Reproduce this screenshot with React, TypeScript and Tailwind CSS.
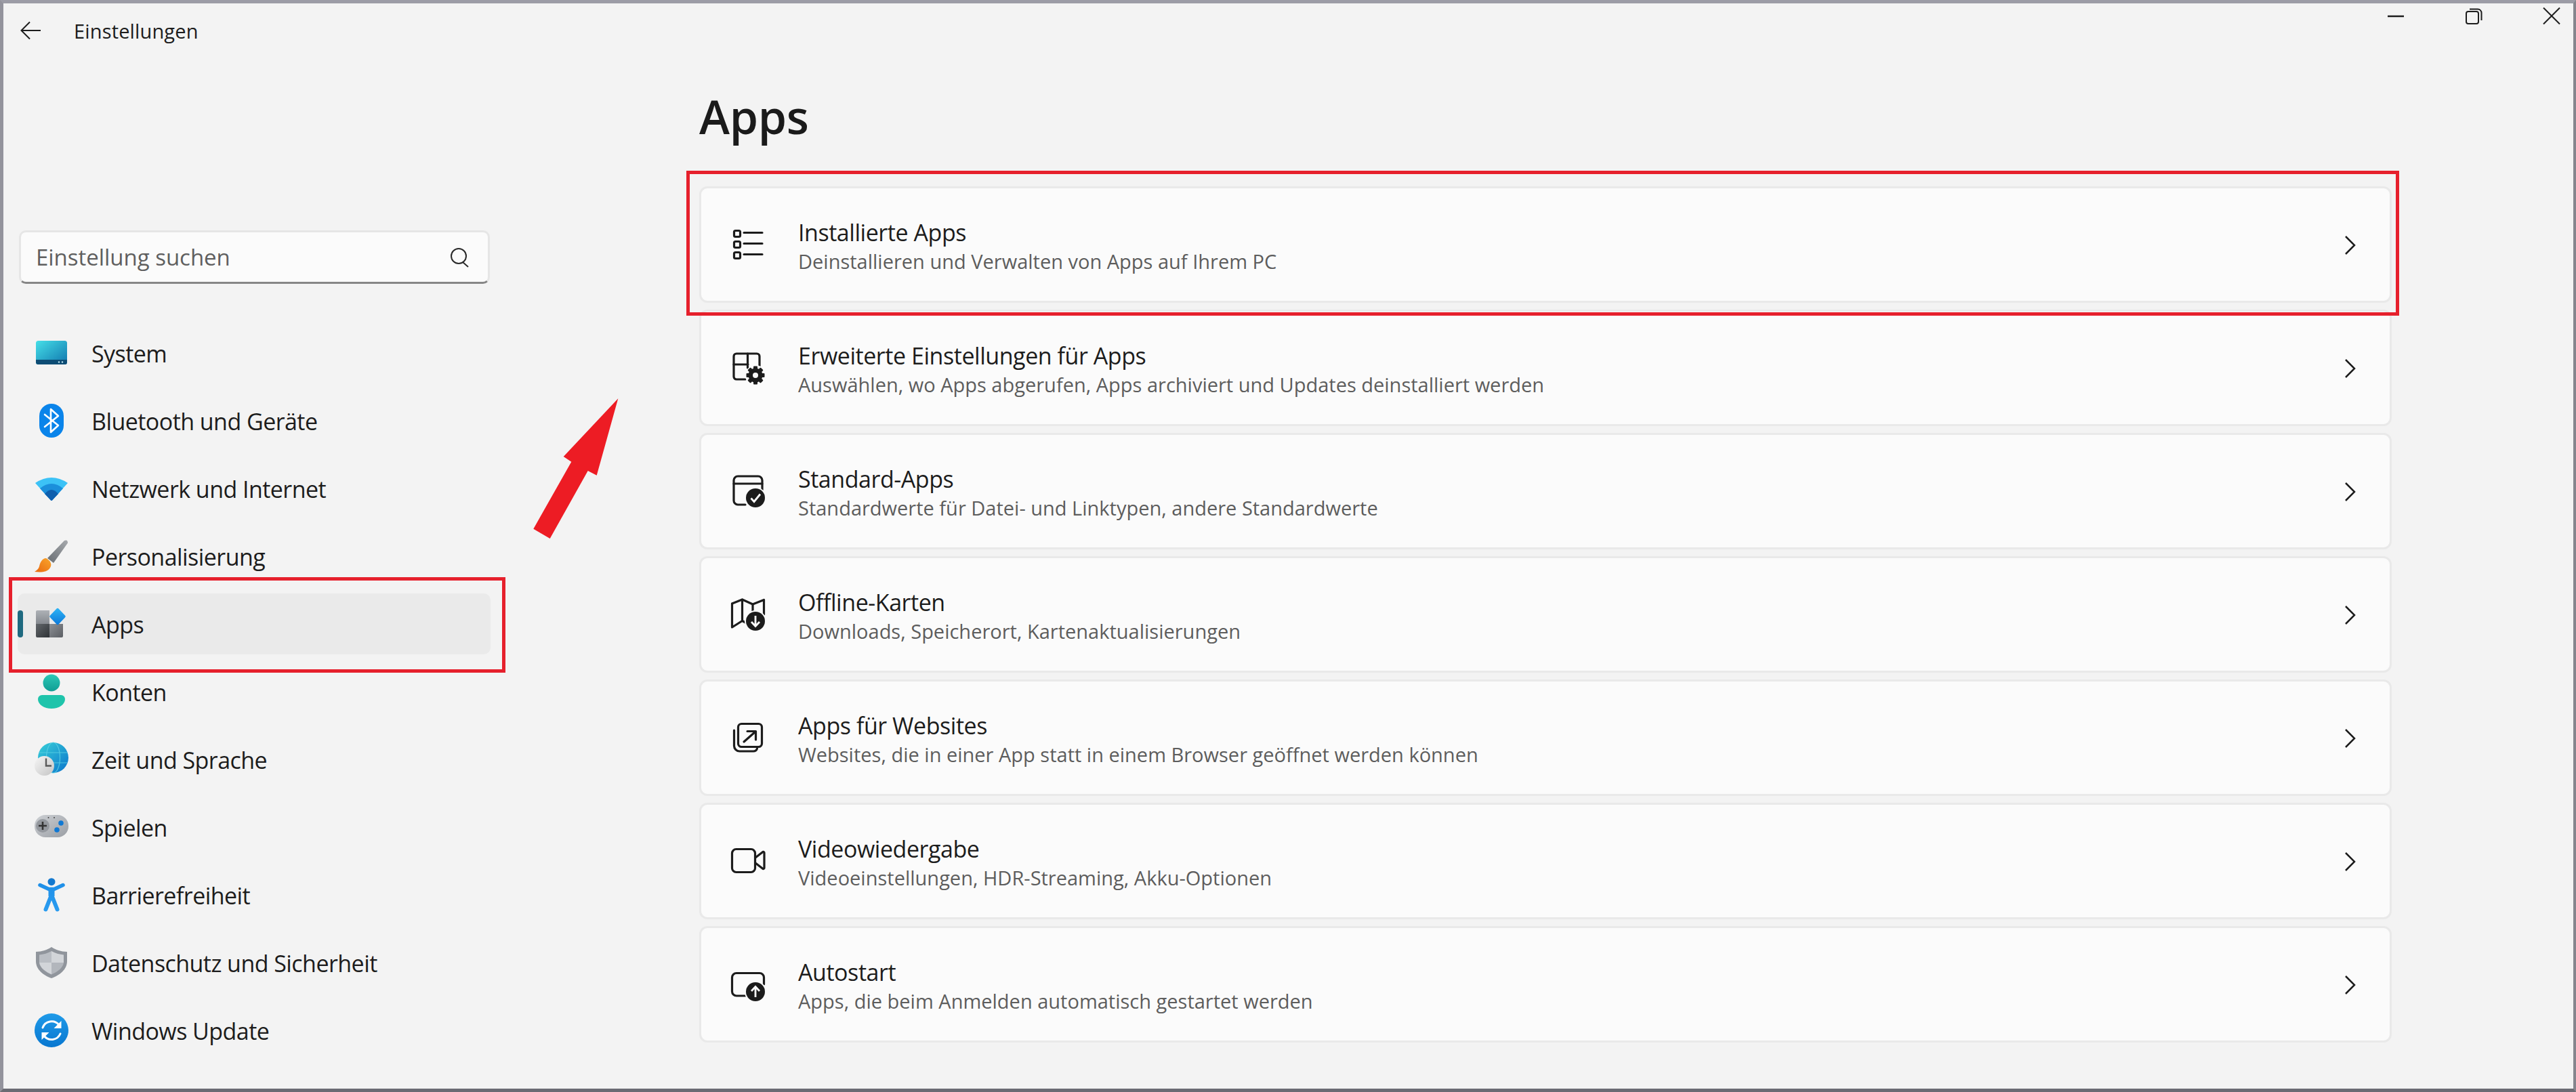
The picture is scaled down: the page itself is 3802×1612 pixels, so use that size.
import React from "react";

const INK = "#1c1c1c";

function IconSystem() {
  return (
    <svg viewBox="0 0 60 60" className="h-[60px] w-[60px]">
      <defs>
        <linearGradient id="sysA" x1="0" y1="0" x2="1" y2="1">
          <stop offset="0" stopColor="#45dfe8" />
          <stop offset="1" stopColor="#0f75ad" />
        </linearGradient>
      </defs>
      <rect x="7" y="12" width="46" height="35" rx="3.5" fill="url(#sysA)" />
      <path d="M7 40h46v3.5a3.5 3.5 0 0 1-3.5 3.5h-39A3.5 3.5 0 0 1 7 43.5z" fill="#0d4c74" />
      <circle cx="41" cy="43.5" r="1.2" fill="#bfe6f2" />
      <circle cx="46" cy="43.5" r="1.2" fill="#bfe6f2" />
    </svg>
  );
}

function IconBluetooth() {
  return (
    <svg viewBox="0 0 60 60" className="h-[60px] w-[60px]">
      <rect x="12" y="5" width="36" height="50" rx="18" fill="#0a84ea" />
      <path d="M20 21 40 37 29 47V13L40 23 20 39" fill="none" stroke="#fff" strokeWidth="2.6" strokeLinejoin="round" strokeLinecap="round" />
    </svg>
  );
}

function IconWifi() {
  return (
    <svg viewBox="0 0 60 60" className="h-[60px] w-[60px]">
      <path d="M6 22Q30 6 54 22L31 47.5a1.4 1.4 0 0 1-2 0z" fill="#3cc2f6" />
      <path d="M13 30Q30 16 47 30L31 47.5a1.4 1.4 0 0 1-2 0z" fill="#1b8fdb" />
      <path d="M20 38Q30 26 40 38L31 47.5a1.4 1.4 0 0 1-2 0z" fill="#0f5fae" />
    </svg>
  );
}

function IconBrush() {
  return (
    <svg viewBox="0 0 60 60" className="h-[60px] w-[60px]">
      <defs>
        <linearGradient id="brA" x1="1" y1="0" x2="0" y2="1">
          <stop offset="0" stopColor="#a6a9ad" />
          <stop offset="1" stopColor="#686d72" />
        </linearGradient>
        <linearGradient id="brB" x1="1" y1="0" x2="0" y2="1">
          <stop offset="0" stopColor="#f9a62c" />
          <stop offset="1" stopColor="#e8680f" />
        </linearGradient>
      </defs>
      <path d="M49 7Q54 5 54 10.500L33 40 24 33z" fill="url(#brA)" />
      <path d="M22 33C16 33 13 40 12 45 11 49 8 51 5 53 14 54 24 54 28 47 31 42 29 37 22 33z" fill="url(#brB)" />
    </svg>
  );
}

function IconApps() {
  return (
    <svg viewBox="0 0 60 60" className="h-[60px] w-[60px]">
      <defs>
        <linearGradient id="apA" x1="0" y1="0" x2="0" y2="1">
          <stop offset="0" stopColor="#adb1b6" />
          <stop offset="1" stopColor="#85898f" />
        </linearGradient>
        <linearGradient id="apB" x1="0" y1="0" x2="1" y2="1">
          <stop offset="0" stopColor="#62666a" />
          <stop offset="1" stopColor="#2f3337" />
        </linearGradient>
        <linearGradient id="apC" x1="0" y1="0" x2="1" y2="1">
          <stop offset="0" stopColor="#8d9095" />
          <stop offset="1" stopColor="#5b5e63" />
        </linearGradient>
        <linearGradient id="apD" x1="0" y1="0" x2="0" y2="1">
          <stop offset="0" stopColor="#2cb4f6" />
          <stop offset="1" stopColor="#0d78d8" />
        </linearGradient>
      </defs>
      <path d="M9 10h18v20H7V12a2 2 0 0 1 2-2z" fill="url(#apA)" />
      <path d="M7 30h20v20H9a2 2 0 0 1-2-2z" fill="url(#apB)" />
      <path d="M27 30h20v18a2 2 0 0 1-2 2H27z" fill="url(#apC)" />
      <path d="M37.500 7.500a2 2 0 0 1 3 0l9.500 10a2 2 0 0 1 0 3l-9.500 10a2 2 0 0 1-3 0l-9.500-10a2 2 0 0 1 0-3z" fill="url(#apD)" />
    </svg>
  );
}

function IconAccount() {
  return (
    <svg viewBox="0 0 60 60" className="h-[60px] w-[60px]">
      <defs>
        <linearGradient id="acA" x1="0" y1="0" x2="0" y2="1">
          <stop offset="0" stopColor="#2cc7b6" />
          <stop offset="1" stopColor="#109e94" />
        </linearGradient>
      </defs>
      <circle cx="30" cy="17" r="12.500" fill="url(#acA)" />
      <path d="M10 41a6 6 0 0 1 6-6h28a6 6 0 0 1 6 6c0 8-9 14-20 14s-20-6-20-14z" fill="#1fc4ab" />
    </svg>
  );
}

function IconTime() {
  return (
    <svg viewBox="0 0 60 60" className="h-[60px] w-[60px]">
      <defs>
        <linearGradient id="tmA" x1="0" y1="0" x2="1" y2="1">
          <stop offset="0" stopColor="#37d0d8" />
          <stop offset="1" stopColor="#0b74cc" />
        </linearGradient>
        <linearGradient id="tmB" x1="0" y1="0" x2="1" y2="1">
          <stop offset="0" stopColor="#f6f6f6" />
          <stop offset="1" stopColor="#c4c4c4" />
        </linearGradient>
      </defs>
      <circle cx="32.500" cy="27.500" r="22.500" fill="url(#tmA)" />
      <g fill="none" stroke="#5fd3e6" strokeWidth="1.200" opacity="0.8">
        <ellipse cx="32.500" cy="27.500" rx="10" ry="22.500" />
        <path d="M12 20h41M12 35h41" />
      </g>
      <circle cx="19.500" cy="39.500" r="14.500" fill="url(#tmB)" />
      <path d="M22 28.500V39.500H30" fill="none" stroke="#5a5a5a" strokeWidth="2.400" />
    </svg>
  );
}

function IconGame() {
  return (
    <svg viewBox="0 0 60 60" className="h-[60px] w-[60px]">
      <defs>
        <linearGradient id="gmA" x1="0" y1="0" x2="1" y2="1">
          <stop offset="0" stopColor="#cdd0d4" />
          <stop offset="1" stopColor="#9a9ea4" />
        </linearGradient>
      </defs>
      <rect x="5" y="12" width="50" height="33" rx="16" fill="url(#gmA)" />
      <circle cx="17" cy="28" r="10" fill="#94989e" />
      <path d="M11 28h12M17 22v12" stroke="#333" strokeWidth="2.600" />
      <circle cx="44" cy="24" r="3.800" fill="#0f78d4" />
      <circle cx="38" cy="34" r="3.800" fill="#0f78d4" />
      <circle cx="25.500" cy="16" r="1" fill="#444" />
      <circle cx="34" cy="16" r="1" fill="#444" />
    </svg>
  );
}

function IconAccess() {
  return (
    <svg viewBox="0 0 60 60" className="h-[60px] w-[60px]">
      <defs>
        <linearGradient id="axA" gradientUnits="userSpaceOnUse" x1="30" y1="5" x2="30" y2="55">
          <stop offset="0" stopColor="#1d8de6" />
          <stop offset="1" stopColor="#2a9cf0" />
        </linearGradient>
      </defs>
      <circle cx="30" cy="10.700" r="5.500" fill="#1479cf" />
      <path d="M13 15.500 26 21.500H34L47 15.500" fill="none" stroke="url(#axA)" strokeWidth="5.500" strokeLinecap="round" strokeLinejoin="round" />
      <path d="M30 22V32" stroke="url(#axA)" strokeWidth="9" />
      <path d="M21.500 51.500 30 30 38.500 51.500" fill="none" stroke="url(#axA)" strokeWidth="6" strokeLinecap="round" strokeLinejoin="round" />
    </svg>
  );
}

function IconShield() {
  return (
    <svg viewBox="0 0 60 60" className="h-[60px] w-[60px]">
      <path d="M30 7C36 11 44 14 53 14V28C53 40 42 49 30 53 18 49 7 40 7 28V14C16 14 24 11 30 7z" fill="#90959c" />
      <path d="M30 13C25 16 18 18 12 18.500V30H30z" fill="#babec4" />
      <path d="M30 13C35 16 42 18 48 18.500V30H30z" fill="#d2d5d9" />
      <path d="M12 30C13 38 22 44 30 47.500V30z" fill="#d2d5d9" />
      <path d="M48 30C47 38 38 44 30 47.500V30z" fill="#b2b6bc" />
    </svg>
  );
}

function IconUpdate() {
  return (
    <svg viewBox="0 0 60 60" className="h-[60px] w-[60px]">
      <defs>
        <linearGradient id="upA" x1="0" y1="0" x2="0" y2="1">
          <stop offset="0" stopColor="#1f9ae8" />
          <stop offset="1" stopColor="#0877d0" />
        </linearGradient>
      </defs>
      <circle cx="30" cy="30" r="25" fill="url(#upA)" />
      <path d="M17 26A14 14 0 0 1 41 22" fill="none" stroke="#fff" strokeWidth="3" strokeLinecap="round" />
      <path d="M44.500 16V27H33.500z" fill="#fff" />
      <path d="M43 35A14 14 0 0 1 19 38" fill="none" stroke="#fff" strokeWidth="3" strokeLinecap="round" />
      <path d="M15.500 44V33H26.500z" fill="#fff" />
    </svg>
  );
}

function Badge({ cy, kind }: { cy: number; kind: "check" | "down" | "up" }) {
  return (
    <g>
      <circle cx="41" cy={cy} r="14" fill={INK} />
      {kind === "check" && <path d={`M34.500 ${cy + 0.5}l4.500 5 9-11`} fill="none" stroke="#fff" strokeWidth="2.800" />}
      {kind === "down" && <path d={`M41 ${cy - 8}v15M35 ${cy + 1}l6 6.500 6-6.500`} fill="none" stroke="#fff" strokeWidth="2.800" />}
      {kind === "up" && <path d={`M41 ${cy + 8}v-15M35 ${cy - 1}l6-6.500 6 6.500`} fill="none" stroke="#fff" strokeWidth="2.800" />}
    </g>
  );
}

const lineProps = { fill: "none", stroke: INK, strokeWidth: 3.2, strokeLinecap: "round" as const, strokeLinejoin: "round" as const };

function RowInstalled() {
  return (
    <svg viewBox="0 0 60 60" className="h-[60px] w-[60px]">
      <g {...lineProps}>
        <rect x="9.500" y="9.500" width="9" height="9" rx="2" />
        <rect x="9.500" y="25.500" width="9" height="9" rx="2" />
        <rect x="9.500" y="41.500" width="9" height="9" rx="2" />
        <path d="M24 12.500h27M24 28.500h27M24 44.500h27" />
      </g>
    </svg>
  );
}

function RowAdvanced() {
  const teeth = [0, 45, 90, 135];
  return (
    <svg viewBox="0 0 60 60" className="h-[60px] w-[60px]">
      <g {...lineProps}>
        <path d="M26 47H13a4 4 0 0 1-4-4V13a4 4 0 0 1 4-4h30a4 4 0 0 1 4 4v14" />
        <path d="M9 25H30M29.500 9V30" />
      </g>
      <circle cx="41" cy="41" r="15" fill="#fbfbfb" />
      {teeth.map((a) => (
        <rect key={a} x="38" y="27.500" width="6" height="27" rx="1" fill={INK} transform={`rotate(${a} 41 41)`} />
      ))}
      <circle cx="41" cy="41" r="10.500" fill={INK} />
      <circle cx="41" cy="41" r="4" fill="#fbfbfb" />
    </svg>
  );
}

function RowDefault() {
  return (
    <svg viewBox="0 0 60 60" className="h-[60px] w-[60px]">
      <g {...lineProps}>
        <path d="M26 50H15a6 6 0 0 1-6-6V14a6 6 0 0 1 6-6h30a6 6 0 0 1 6 6v14" />
        <path d="M9 19H51" />
      </g>
      <circle cx="41" cy="40" r="16" fill="#fbfbfb" />
      <Badge cy={40} kind="check" />
    </svg>
  );
}

function RowMaps() {
  return (
    <svg viewBox="0 0 60 60" className="h-[60px] w-[60px]">
      <g {...lineProps}>
        <path d="M6.500 14 21.500 8 37 15 53.500 8.500V30" />
        <path d="M6.500 14V49L21.500 39.500 28 43" />
        <path d="M21.500 8V39.500M37 15V28" />
      </g>
      <circle cx="41" cy="40" r="16" fill="#fbfbfb" />
      <Badge cy={40} kind="down" />
    </svg>
  );
}

function RowWebsites() {
  return (
    <svg viewBox="0 0 60 60" className="h-[60px] w-[60px]">
      <g {...lineProps}>
        <rect x="15.500" y="9.500" width="35" height="34" rx="5" />
        <path d="M24 36 41 21M29 20.500H41.500V33" />
        <path d="M9.500 19v23a8 8 0 0 0 8 8H38a6 6 0 0 0 5.500-4" />
      </g>
    </svg>
  );
}

function RowVideo() {
  return (
    <svg viewBox="0 0 60 60" className="h-[60px] w-[60px]">
      <g {...lineProps}>
        <rect x="6.500" y="12.500" width="34" height="34" rx="6" />
        <path d="M41 25 52 16.500a1.500 1.500 0 0 1 2 1.500V40a1.500 1.500 0 0 1-2 1.500L41 33" />
      </g>
    </svg>
  );
}

function RowStartup() {
  return (
    <svg viewBox="0 0 60 60" className="h-[60px] w-[60px]">
      <g {...lineProps}>
        <path d="M26 47H13a6.500 6.500 0 0 1-6.500-6.500V20A6.500 6.500 0 0 1 13 13.500h34A6.500 6.500 0 0 1 53.500 20v10" />
      </g>
      <circle cx="41" cy="41" r="16" fill="#fbfbfb" />
      <Badge cy={41} kind="up" />
    </svg>
  );
}

const navItems = [
  { label: "System", icon: <IconSystem /> },
  { label: "Bluetooth und Geräte", icon: <IconBluetooth /> },
  { label: "Netzwerk und Internet", icon: <IconWifi /> },
  { label: "Personalisierung", icon: <IconBrush /> },
  { label: "Apps", icon: <IconApps />, active: true },
  { label: "Konten", icon: <IconAccount /> },
  { label: "Zeit und Sprache", icon: <IconTime /> },
  { label: "Spielen", icon: <IconGame /> },
  { label: "Barrierefreiheit", icon: <IconAccess /> },
  { label: "Datenschutz und Sicherheit", icon: <IconShield /> },
  { label: "Windows Update", icon: <IconUpdate /> },
];

const cards = [
  { title: "Installierte Apps", sub: "Deinstallieren und Verwalten von Apps auf Ihrem PC", icon: <RowInstalled /> },
  { title: "Erweiterte Einstellungen für Apps", sub: "Auswählen, wo Apps abgerufen, Apps archiviert und Updates deinstalliert werden", icon: <RowAdvanced /> },
  { title: "Standard-Apps", sub: "Standardwerte für Datei- und Linktypen, andere Standardwerte", icon: <RowDefault /> },
  { title: "Offline-Karten", sub: "Downloads, Speicherort, Kartenaktualisierungen", icon: <RowMaps /> },
  { title: "Apps für Websites", sub: "Websites, die in einer App statt in einem Browser geöffnet werden können", icon: <RowWebsites /> },
  { title: "Videowiedergabe", sub: "Videoeinstellungen, HDR-Streaming, Akku-Optionen", icon: <RowVideo /> },
  { title: "Autostart", sub: "Apps, die beim Anmelden automatisch gestartet werden", icon: <RowStartup /> },
];

export default function App() {
  return (
    <div className="relative flex h-[1612px] w-[3802px] flex-col border-t-[5px] border-r-[4px] border-b-[5px] border-l-[5px] border-t-[#9c9ca6] border-r-[#85858d] border-b-[#6b6b73] border-l-[#93939c] bg-[#f3f3f3] font-['Open_Sans','Liberation_Sans',sans-serif] text-[#1c1c1c]">
      {/* title bar */}
      <div className="flex h-[80px] shrink-0 items-start justify-between pr-[17px] pl-[25px]">
        <div className="flex h-[80px] items-center">
          <svg viewBox="0 0 30 30" className="h-[30px] w-[30px]" fill="none" stroke="#1c1c1c" strokeWidth="2">
            <path d="M1.500 15H30M14 2.500 1.500 15 14 27.500" />
          </svg>
          <span className="ml-[49px] pt-[1px] text-[29px] tracking-[0.15px]">Einstellungen</span>
        </div>
        <div className="flex gap-[85px] pt-[4px]">
          <svg viewBox="0 0 30 30" className="h-[30px] w-[30px]" fill="none" stroke="#1c1c1c" strokeWidth="2.500">
            <path d="M3 15H27" />
          </svg>
          <svg viewBox="0 0 30 30" className="h-[30px] w-[30px]" fill="none" stroke="#1c1c1c" strokeWidth="2">
            <rect x="4" y="8" width="18" height="18" rx="3" />
            <path d="M9 4.500h12a5.500 5.500 0 0 1 5.500 5.500V21" />
          </svg>
          <svg viewBox="0 0 30 30" className="h-[30px] w-[30px]" fill="none" stroke="#1c1c1c" strokeWidth="2">
            <path d="M3 2.500 27 26.500M27 2.500 3 26.500" />
          </svg>
        </div>
      </div>

      <div className="flex flex-1">
        {/* sidebar */}
        <aside className="flex w-[723px] shrink-0 flex-col pt-[255px] pl-[21px]">
          <div className="ml-[2px] flex h-[79px] w-[695px] items-center justify-between rounded-[10px] border-[3px] border-[#e6e6e6] border-b-[#868686] bg-[#fbfbfb] pr-[27px] pl-[22px]">
            <span className="pt-[1px] text-[33px] tracking-[-0.03px] text-[#5f5f5f]">Einstellung suchen</span>
            <svg viewBox="0 0 30 30" className="h-[30px] w-[30px]" fill="none" stroke="#2a2a2a" strokeWidth="2">
              <circle cx="14" cy="13" r="11" />
              <path d="M20 22 28 29" />
            </svg>
          </div>
          <nav className="mt-[57px] flex flex-col gap-[10px]">
            {navItems.map((item) => (
              <div key={item.label} className={`flex h-[90px] w-[698px] items-center rounded-[10px] ${item.active ? "bg-[#eaeaea]" : ""}`}>
                <div className={`h-[40px] w-[8px] rounded-full ${item.active ? "bg-[#1f6a80]" : ""}`} />
                <div className="ml-[12px] h-[60px] w-[60px]">{item.icon}</div>
                <span className="ml-[29px] pt-[3px] text-[34px] tracking-[-0.55px]">{item.label}</span>
              </div>
            ))}
          </nav>
        </aside>

        {/* main */}
        <main className="flex flex-1 flex-col pr-[268px] pl-[304px]">
          <h1 className="h-[190px] pt-[47px] text-[68px] leading-[80px] font-semibold tracking-[-0.3px] text-[#1a1a1a]">Apps</h1>
          <div className="flex flex-col gap-[10px]">
            {cards.map((card) => (
              <div key={card.title} className="flex h-[172px] items-center rounded-[12px] border-[3px] border-[#e9e9e9] bg-[#fbfbfb] pr-[44px] pl-[39px]">
                <div className="h-[60px] w-[60px] shrink-0">{card.icon}</div>
                <div className="ml-[44px] flex flex-col pt-[4px]">
                  <span className="text-[34px] leading-[44px] tracking-[-0.45px]">{card.title}</span>
                  <span className="pt-[2px] text-[29px] leading-[38px] text-[#5d5d5d]">{card.sub}</span>
                </div>
                <svg viewBox="0 0 30 30" className="mt-[2px] ml-auto h-[30px] w-[30px]" fill="none" stroke="#1c1c1c" strokeWidth="2.500">
                  <path d="M9 2 22 15 9 28" />
                </svg>
              </div>
            ))}
          </div>
        </main>
      </div>

      {/* annotations */}
      <div className="absolute top-[847px] left-[8px] h-[141px] w-[733px] border-[5px] border-[#e6202c]" />
      <div className="absolute top-[247px] left-[1008px] h-[214px] w-[2528px] border-[5px] border-[#e6202c]" />
      <svg viewBox="0 0 170 240" className="absolute top-[565px] left-[765px] h-[240px] w-[170px]">
        <path d="M142.300 18.300 61.700 104 73.300 111.700 17.300 210.700 41.700 225 97.700 125 110.700 131.700z" fill="#ed1c24" />
      </svg>
    </div>
  );
}
